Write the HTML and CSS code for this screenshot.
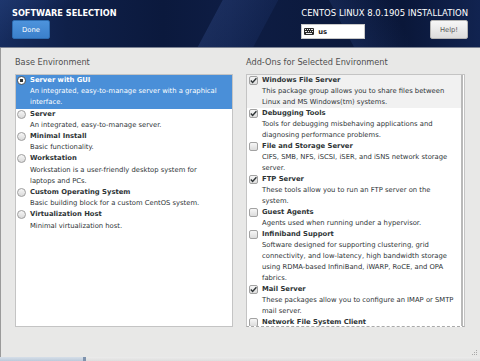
FILE: index.html
```html
<!DOCTYPE html>
<html lang="en">
<head>
<meta charset="utf-8">
<title>Software Selection</title>
<link rel="stylesheet" href="styles.css">
</head>
<body>
<header class="top">
  <div class="top-left">
    <h1 class="spoke-title">SOFTWARE SELECTION</h1>
    <button class="btn btn-done">Done</button>
  </div>
  <div class="top-right">
    <div class="product">CENTOS LINUX 8.0.1905 INSTALLATION</div>
    <div class="top-row">
      <div class="kbd">
        <svg class="kbd-icon" width="10" height="7" viewBox="0 0 10 7">
          <rect x="0" y="0" width="10" height="7" rx="1" fill="#2b2b2b"/>
          <g fill="#e8e8e8">
            <rect x="1" y="1" width="1" height="1"/><rect x="3" y="1" width="1" height="1"/><rect x="5" y="1" width="1" height="1"/><rect x="7" y="1" width="2" height="1"/>
            <rect x="1" y="3" width="2" height="1"/><rect x="4" y="3" width="1" height="1"/><rect x="6" y="3" width="1" height="1"/><rect x="8" y="3" width="1" height="1"/>
            <rect x="2" y="5" width="6" height="1"/>
          </g>
        </svg>
        <span class="kbd-label">us</span>
      </div>
      <button class="btn btn-help">Help!</button>
    </div>
  </div>
</header>

<main class="content">
  <section class="column">
    <div class="col-label">Base Environment</div>
    <div class="listbox envs">
      <div class="item selected">
        <span class="radio on"></span>
        <div class="item-text"><div class="item-title">Server with GUI</div><div class="item-desc">An integrated, easy-to-manage server with a graphical<br>interface.</div></div>
      </div>
      <div class="item">
        <span class="radio"></span>
        <div class="item-text"><div class="item-title">Server</div><div class="item-desc">An integrated, easy-to-manage server.</div></div>
      </div>
      <div class="item">
        <span class="radio"></span>
        <div class="item-text"><div class="item-title">Minimal Install</div><div class="item-desc">Basic functionality.</div></div>
      </div>
      <div class="item">
        <span class="radio"></span>
        <div class="item-text"><div class="item-title">Workstation</div><div class="item-desc">Workstation is a user-friendly desktop system for<br>laptops and PCs.</div></div>
      </div>
      <div class="item">
        <span class="radio"></span>
        <div class="item-text"><div class="item-title">Custom Operating System</div><div class="item-desc">Basic building block for a custom CentOS system.</div></div>
      </div>
      <div class="item">
        <span class="radio"></span>
        <div class="item-text"><div class="item-title">Virtualization Host</div><div class="item-desc">Minimal virtualization host.</div></div>
      </div>
    </div>
  </section>

  <section class="column">
    <div class="col-label">Add-Ons for Selected Environment</div>
    <div class="listbox addons">
      <div class="addon-scroll">
        <div class="item hover">
          <span class="check on"><svg width="9" height="9" viewBox="0 0 9 9"><path d="M1.8 4.6 L3.6 6.4 L7.4 2.2" fill="none" stroke="#2e3436" stroke-width="1.4"/></svg></span>
          <div class="item-text"><div class="item-title">Windows File Server</div><div class="item-desc">This package group allows you to share files between<br>Linux and MS Windows(tm) systems.</div></div>
        </div>
        <div class="item">
          <span class="check on"><svg width="9" height="9" viewBox="0 0 9 9"><path d="M1.8 4.6 L3.6 6.4 L7.4 2.2" fill="none" stroke="#2e3436" stroke-width="1.4"/></svg></span>
          <div class="item-text"><div class="item-title">Debugging Tools</div><div class="item-desc">Tools for debugging misbehaving applications and<br>diagnosing performance problems.</div></div>
        </div>
        <div class="item">
          <span class="check"></span>
          <div class="item-text"><div class="item-title">File and Storage Server</div><div class="item-desc">CIFS, SMB, NFS, iSCSI, iSER, and iSNS network storage<br>server.</div></div>
        </div>
        <div class="item">
          <span class="check on"><svg width="9" height="9" viewBox="0 0 9 9"><path d="M1.8 4.6 L3.6 6.4 L7.4 2.2" fill="none" stroke="#2e3436" stroke-width="1.4"/></svg></span>
          <div class="item-text"><div class="item-title">FTP Server</div><div class="item-desc">These tools allow you to run an FTP server on the<br>system.</div></div>
        </div>
        <div class="item">
          <span class="check"></span>
          <div class="item-text"><div class="item-title">Guest Agents</div><div class="item-desc">Agents used when running under a hypervisor.</div></div>
        </div>
        <div class="item">
          <span class="check"></span>
          <div class="item-text"><div class="item-title">Infiniband Support</div><div class="item-desc">Software designed for supporting clustering, grid<br>connectivity, and low-latency, high bandwidth storage<br>using RDMA-based InfiniBand, iWARP, RoCE, and OPA<br>fabrics.</div></div>
        </div>
        <div class="item">
          <span class="check on"><svg width="9" height="9" viewBox="0 0 9 9"><path d="M1.8 4.6 L3.6 6.4 L7.4 2.2" fill="none" stroke="#2e3436" stroke-width="1.4"/></svg></span>
          <div class="item-text"><div class="item-title">Mail Server</div><div class="item-desc">These packages allow you to configure an IMAP or SMTP<br>mail server.</div></div>
        </div>
        <div class="item">
          <span class="check"></span>
          <div class="item-text"><div class="item-title">Network File System Client</div></div>
        </div>
      </div>
      <div class="scrollbar"></div>
    </div>
  </section>

  <svg class="grip" width="6" height="6" viewBox="0 0 6 6">
    <g fill="#a8a8a8">
      <rect x="4" y="0" width="1" height="1"/>
      <rect x="2" y="2" width="1" height="1"/><rect x="4" y="2" width="1" height="1"/>
      <rect x="0" y="4" width="1" height="1"/><rect x="2" y="4" width="1" height="1"/><rect x="4" y="4" width="1" height="1"/>
    </g>
  </svg>
</main>

<footer class="strip">
  <div class="strip-blue"></div>
  <div class="strip-mark"></div>
  <div class="strip-rest"></div>
</footer>
</body>
</html>
```

FILE: styles.css
```css
html, body {
  margin: 0;
  padding: 0;
  width: 480px;
  height: 361px;
  overflow: hidden;
}

body {
  display: flex;
  flex-direction: column;
  background: #e8e8e7;
  font-family: "DejaVu Sans", sans-serif;
  color: #2e3436;
}

/* ---------- header ---------- */
.top {
  flex: 0 0 auto;
  height: 39px;
  padding: 8px 12px 0 12px;
  display: flex;
  justify-content: space-between;
  border-bottom: 1px solid #7c8394;
  background:
    linear-gradient(118deg, rgba(0,0,0,0) 0%, rgba(0,0,0,0) 44%, rgba(60,90,160,0.28) 44.2%, rgba(40,70,140,0.18) 55%, rgba(0,0,0,0) 55.2%),
    linear-gradient(62deg, rgba(0,0,0,0) 0%, rgba(0,0,0,0) 70%, rgba(50,80,150,0.22) 70.2%, rgba(0,0,0,0) 82%),
    linear-gradient(150deg, rgba(45,75,140,0.35) 0%, rgba(0,0,0,0) 14%),
    linear-gradient(90deg, #162c5e 0%, #0f2049 14%, #0b193d 34%, #0e1d44 48%, #0c1a3e 66%, #0a1739 84%, #112350 100%);
}

.top-left {
  display: flex;
  flex-direction: column;
  align-items: flex-start;
}

.spoke-title {
  margin: 0 0 2px 0;
  font-size: 8.2px;
  line-height: 10px;
  font-weight: bold;
  color: #ffffff;
  letter-spacing: 0;
}

.btn {
  box-sizing: border-box;
  width: 38px;
  height: 19px;
  padding: 0;
  margin: 0;
  border-radius: 2px;
  font-family: "DejaVu Sans", sans-serif;
  font-size: 6.8px;
}

.btn-done {
  color: #ffffff;
  background: linear-gradient(#4d93dc, #3b80cb);
  border: 1px solid #2c6bb0;
}

.btn-help {
  color: #5a5a5a;
  background: linear-gradient(#f7f7f7, #dcdcdc);
  border: 1px solid #b4b4b4;
}

.top-right {
  display: flex;
  flex-direction: column;
}

.product {
  font-size: 8.5px;
  line-height: 10px;
  color: #ffffff;
  margin-bottom: 2px;
  white-space: nowrap;
}

.top-row {
  display: flex;
  justify-content: space-between;
  align-items: flex-start;
}

.kbd {
  box-sizing: border-box;
  width: 64px;
  height: 15px;
  margin-top: 4px;
  background: #ffffff;
  border: 1px solid #c8c8c8;
  display: flex;
  align-items: center;
  padding-left: 2px;
  gap: 4px;
}

.kbd-icon {
  display: block;
}

.kbd-label {
  font-size: 6.8px;
  font-weight: bold;
  color: #222222;
}

/* ---------- content ---------- */
.content {
  position: relative;
  flex: 1 1 auto;
  display: grid;
  grid-template-columns: 218px 219px;
  column-gap: 13px;
  align-content: start;
  padding: 9px 15px 0 14px;
  border-left: 1px solid #9a9a9a;
}

.col-label {
  font-size: 8.2px;
  line-height: 11px;
  color: #4f4f4f;
  margin-bottom: 6px;
  white-space: nowrap;
}

.listbox {
  box-sizing: border-box;
  height: 253px;
  background: #ffffff;
  border: 1px solid #c4c4c4;
  overflow: hidden;
}

.listbox.addons {
  display: flex;
  border-bottom: 1px dashed #a9a9a9;
  padding-right: 1px;
}

.addon-scroll {
  flex: 1 1 auto;
  overflow: hidden;
}

.scrollbar {
  flex: 0 0 2px;
  background: #b9b9b9;
}

.item {
  display: grid;
  grid-template-columns: 9px 1fr;
  column-gap: 4px;
  padding-left: 1px;
  font-size: 6.8px;
  line-height: 11px;
  color: #2e3436;
}

.envs .item {
  line-height: 11.2px;
}

.addons .item {
  padding-left: 2px;
}

.item.selected {
  background: #4a8fd8;
  color: #ffffff;
}

.item.hover {
  background: #f1f1f1;
}

.item-title {
  font-weight: bold;
  white-space: nowrap;
}

.item-desc {
  white-space: nowrap;
}

.radio {
  box-sizing: border-box;
  width: 9px;
  height: 9px;
  margin-top: 1px;
  border-radius: 50%;
  border: 1px solid #9d9d9d;
  background: linear-gradient(#f6f6f6, #dadada);
}

.radio.on {
  border-color: #5a5a5a;
  background: radial-gradient(circle, #2e3436 0, #2e3436 1.6px, #ffffff 2px);
}

.check {
  box-sizing: border-box;
  width: 9px;
  height: 9px;
  margin-top: 1px;
  border-radius: 2px;
  border: 1px solid #a2a2a2;
  background: linear-gradient(#f6f6f6, #dcdcdc);
  position: relative;
}

.check svg {
  position: absolute;
  left: -1px;
  top: -1px;
}

.grip {
  position: absolute;
  right: 2px;
  bottom: 1px;
}

/* ---------- bottom strip ---------- */
.strip {
  flex: 0 0 4px;
  display: flex;
  background: #e4e4e4;
}

.strip-blue {
  width: 83px;
  background: linear-gradient(#d6dfe9, #bccadb);
}

.strip-mark {
  width: 3px;
  background: #7f93ad;
}

.strip-rest {
  flex: 1 1 auto;
  background: linear-gradient(#ececec, #dedede);
}
```
